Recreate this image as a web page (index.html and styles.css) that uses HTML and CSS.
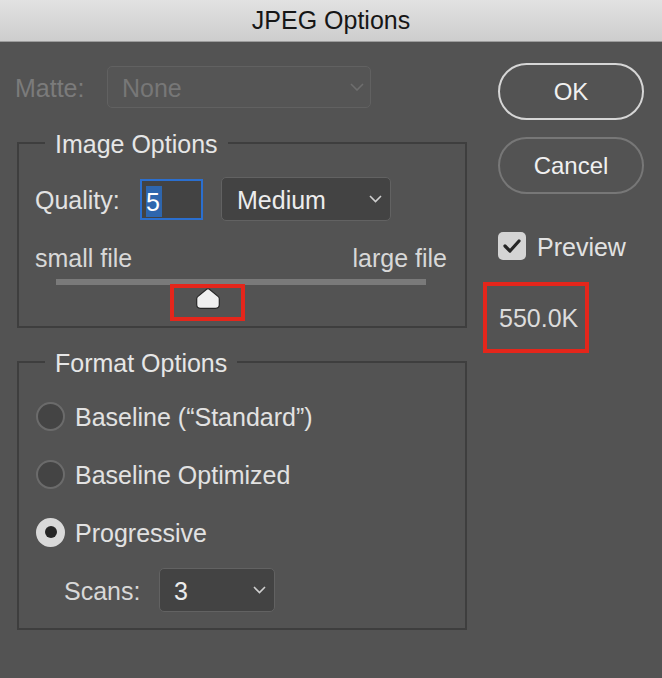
FILE: index.html
```html
<!DOCTYPE html>
<html lang="en">
<head>
<meta charset="utf-8">
<title>JPEG Options</title>
<link rel="stylesheet" href="styles.css">
</head>
<body>
<div class="window">
  <header class="titlebar">JPEG Options</header>
  <div class="content">
    <div class="left">
      <div class="matte-row">
        <span class="label label-dim matte-label">Matte:</span>
        <div class="select select-disabled">
          <span>None</span>
          <svg class="chev" width="14" height="8" viewBox="0 0 14 8"><path d="M1 1 L7 7 L13 1" fill="none" stroke="#6e6e6e" stroke-width="1.6"/></svg>
        </div>
      </div>

      <fieldset class="group group-image">
        <legend>Image Options</legend>
        <div class="quality-row">
          <span class="label quality-label">Quality:</span>
          <div class="num-input"><span class="sel">5</span></div>
          <div class="select select-medium">
            <span>Medium</span>
            <svg class="chev" width="13" height="8" viewBox="0 0 13 8"><path d="M1 1 L6.5 6.5 L12 1" fill="none" stroke="#cfcfcf" stroke-width="1.6"/></svg>
          </div>
        </div>
        <div class="slider-labels">
          <span>small file</span>
          <span>large file</span>
        </div>
        <div class="slider">
          <div class="track"></div>
          <div class="thumb-lane">
            <div class="thumb" style="left:41.1%">
              <svg width="24" height="21" viewBox="0 0 24 21"><path d="M10.6 1.3 Q12 0.2 13.4 1.3 L22.3 8.6 Q23.3 9.4 23.3 10.8 V16.5 Q23.3 20.3 19.5 20.3 H4.5 Q0.7 20.3 0.7 16.5 V10.8 Q0.7 9.4 1.7 8.6 Z" fill="#efefef" stroke="#262626" stroke-width="1.2"/></svg>
              <div class="annot annot-thumb"></div>
            </div>
          </div>
        </div>
      </fieldset>

      <fieldset class="group group-format">
        <legend>Format Options</legend>
        <div class="radio-row">
          <span class="radio"></span>
          <span class="label">Baseline (“Standard”)</span>
        </div>
        <div class="radio-row">
          <span class="radio"></span>
          <span class="label">Baseline Optimized</span>
        </div>
        <div class="radio-row">
          <span class="radio radio-on"><span class="dot"></span></span>
          <span class="label">Progressive</span>
        </div>
        <div class="scans-row">
          <span class="label scans-label">Scans:</span>
          <div class="select select-scans">
            <span>3</span>
            <svg class="chev" width="13" height="8" viewBox="0 0 13 8"><path d="M1 1 L6.5 6.5 L12 1" fill="none" stroke="#cfcfcf" stroke-width="1.6"/></svg>
          </div>
        </div>
      </fieldset>
    </div>

    <div class="right">
      <button class="btn btn-default">OK</button>
      <button class="btn btn-cancel">Cancel</button>
      <div class="check-row">
        <span class="checkbox">
          <svg width="18" height="14" viewBox="0 0 18 14"><path d="M2 7 L7 12 L16 2" fill="none" stroke="#262626" stroke-width="3.2" stroke-linecap="round" stroke-linejoin="round"/></svg>
        </span>
        <span class="label">Preview</span>
      </div>
      <div class="size-box">550.0K</div>
    </div>
  </div>
</div>
</body>
</html>
```

FILE: styles.css
```css
* { box-sizing: border-box; }

html, body {
  margin: 0;
  padding: 0;
  background: #535353;
}

body {
  font-family: "Liberation Sans", Arial, sans-serif;
  font-size: 25px;
  color: #e2e2e2;
}

.window {
  width: 662px;
  height: 678px;
  background: #535353;
  overflow: hidden;
}

.titlebar {
  height: 42px;
  line-height: 41px;
  text-align: center;
  font-size: 25px;
  color: #161616;
  background: linear-gradient(#e2e2e2, #cdcdcd);
  border-bottom: 1px solid #9c9c9c;
}

.content {
  display: flex;
  gap: 31px;
  padding: 24px 0 0 0;
}

.left {
  width: 467px;
  display: flex;
  flex-direction: column;
}

.label {
  white-space: nowrap;
  line-height: 28px;
  padding-top: 2px;
}

.label-dim { color: #7b7b7b; }

.matte-row {
  display: flex;
  align-items: center;
  padding-left: 15px;
  margin-bottom: 21px;
}

.matte-label { width: 92px; }

.select {
  display: flex;
  align-items: center;
  justify-content: space-between;
  border-radius: 5px;
  line-height: 28px;
}

.select > span { padding-top: 2px; }

.select-disabled {
  width: 264px;
  height: 42px;
  padding: 0 6px 0 14px;
  border: 1px solid #616161;
  background: #555555;
  color: #777777;
}

.group {
  margin: 0 0 0 17px;
  padding: 0;
  width: 450px;
  border: 2px solid #3e3e3e;
  min-width: 0;
}

.group legend {
  padding: 2px 10px 0 10px;
  line-height: 26px;
  color: #e6e6e6;
}

.group-image {
  padding: 20px 18px 18px 16px;
  margin-bottom: 20px;
}

.group-image legend { margin-left: 10px; }

.quality-row {
  display: flex;
  align-items: center;
  height: 44px;
}

.quality-label { width: 105px; }

.num-input {
  width: 63px;
  height: 41px;
  border: 2px solid #2b6fcf;
  background: #434343;
  padding: 5px 0 0 4px;
  margin-right: 18px;
}

.num-input .sel {
  display: inline-block;
  width: 16px;
  height: 31px;
  line-height: 33px;
  background: #2e66ae;
  color: #ffffff;
}

.select-medium {
  width: 170px;
  height: 44px;
  padding: 0 8px 0 15px;
  border: 1px solid #626262;
  background: #434343;
  color: #ececec;
}

.slider-labels {
  display: flex;
  justify-content: space-between;
  margin-top: 23px;
  color: #d8d8d8;
}

.slider {
  margin: 6px 21px 0 21px;
}

.track {
  height: 6px;
  background: #7a7a7a;
}

.thumb-lane {
  position: relative;
  height: 23px;
}

.thumb {
  position: absolute;
  top: 3px;
  width: 24px;
  height: 21px;
  transform: translateX(-50%);
}

.thumb svg { display: block; }

.annot {
  position: absolute;
  border: 4px solid #e4261b;
}

.annot-thumb {
  left: -26px;
  top: -4px;
  width: 75px;
  height: 37px;
}

.group-format {
  padding: 20px 18px 16px 17px;
  display: flex;
  flex-direction: column;
  gap: 18px;
}

.group-format legend { margin-left: 9px; }

.radio-row {
  display: flex;
  align-items: center;
  gap: 10px;
  height: 40px;
}

.radio {
  width: 29px;
  height: 29px;
  border-radius: 50%;
  border: 2px solid #6b6b6b;
  background: #444444;
  display: flex;
  align-items: center;
  justify-content: center;
}

.radio-on {
  border-color: #d9d9d9;
  background: #d9d9d9;
}

.radio-on .dot {
  width: 12px;
  height: 12px;
  border-radius: 50%;
  background: #262626;
}

.scans-row {
  display: flex;
  align-items: center;
  padding-left: 28px;
  margin-top: -2px;
  height: 44px;
}

.scans-label {
  width: 95px;
  color: #d8d8d8;
}

.select-scans {
  width: 116px;
  height: 44px;
  padding: 0 8px 0 14px;
  border: 1px solid #626262;
  background: #434343;
  color: #ececec;
}

.right {
  width: 146px;
  display: flex;
  flex-direction: column;
}

.btn {
  width: 146px;
  height: 57px;
  border-radius: 29px;
  background: transparent;
  font-family: "Liberation Sans", Arial, sans-serif;
  font-size: 24px;
  color: #f0f0f0;
  padding: 0;
}

.btn-default {
  margin-top: -3px;
  border: 2px solid #d6d6d6;
}

.btn-cancel {
  margin-top: 17px;
  border: 2px solid #777777;
}

.check-row {
  display: flex;
  align-items: center;
  gap: 11px;
  margin-top: 38px;
  height: 28px;
}

.checkbox {
  width: 28px;
  height: 28px;
  border-radius: 5px;
  background: #d4d4d4;
  display: flex;
  align-items: center;
  justify-content: center;
}

.size-box {
  margin: 22px 0 0 -15px;
  width: 106px;
  height: 71px;
  border: 4px solid #e4261b;
  padding: 2px 0 0 12px;
  line-height: 61px;
  color: #dcdcdc;
}
```
